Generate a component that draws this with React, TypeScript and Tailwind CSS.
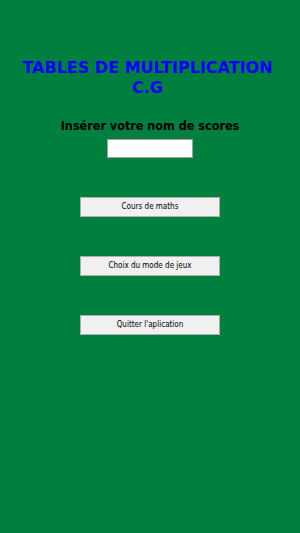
import { useState } from "react";

const buttons = ["Cours de maths", "Choix du mode de jeux", "Quitter l'aplication"];

export default function App() {
  const [name, setName] = useState("");

  return (
    <div className="flex h-[533px] w-[300px] flex-col items-center bg-[#007f3f] font-['DejaVu_Sans',sans-serif]">
      <h1 className="mr-[5px] mt-[58px] text-center text-[16px] font-bold leading-[20px] text-[#0000ff]">
        TABLES DE MULTIPLICATION
        <br />
        C.G
      </h1>

      <p className="mt-[20px] font-['DejaVu_Sans_Condensed','DejaVu_Sans',sans-serif] text-[12.5px] font-bold leading-[16px] text-black">
        Insérer votre nom de scores
      </p>
      <input
        type="text"
        value={name}
        onChange={(e) => setName(e.target.value)}
        className="mt-[5px] h-[19px] w-[86px] border border-[#a0a0a0] bg-white px-1 text-[10px] outline-none"
      />

      <div className="mt-[39px] flex flex-col gap-[39px]">
        {buttons.map((label) => (
          <button
            key={label}
            type="button"
            className="h-[20px] w-[140px] border border-[#adadad] bg-[#f0f0f0] font-['DejaVu_Sans_Condensed','DejaVu_Sans',sans-serif] text-[8px] leading-none text-black"
          >
            {label}
          </button>
        ))}
      </div>
    </div>
  );
}
